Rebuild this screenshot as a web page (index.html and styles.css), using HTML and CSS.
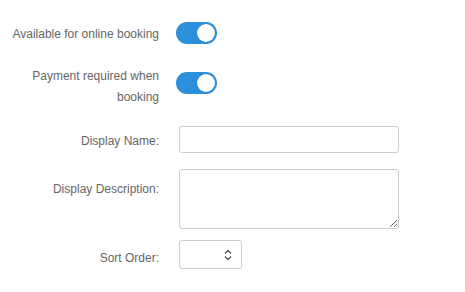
FILE: index.html
```html
<!DOCTYPE html>
<html lang="en">
<head>
    <meta charset="UTF-8">
    <meta name="viewport" content="width=device-width, initial-scale=1.0">
    <link rel="stylesheet" href="styles.css">
</head>
<body>

<!-- Booking settings form -->
<form class="settingsForm">
    <div class="formRow rowFirst">
        <label class="rowLabel labelToggle">Available for online booking</label>
        <div class="rowControl">
            <span class="toggle"><span class="knob"></span></span>
        </div>
    </div>

    <div class="formRow rowPayment">
        <label class="rowLabel">Payment required when booking</label>
        <div class="rowControl">
            <span class="toggle toggleLow"><span class="knob"></span></span>
        </div>
    </div>

    <div class="formRow rowName">
        <label class="rowLabel labelName" for="displayName">Display Name:</label>
        <div class="rowControl">
            <input type="text" id="displayName" class="textInput">
        </div>
    </div>

    <div class="formRow rowDescription">
        <label class="rowLabel labelDescription" for="displayDescription">Display Description:</label>
        <div class="rowControl">
            <textarea id="displayDescription" class="textArea"></textarea>
        </div>
    </div>

    <div class="formRow rowSort">
        <label class="rowLabel labelSort" for="sortOrder">Sort Order:</label>
        <div class="rowControl">
            <div class="selectWrap">
                <select id="sortOrder" class="sortSelect"></select>
                <svg class="chevrons" width="8" height="12" viewBox="0 0 8 12">
                    <path d="M1 4.5 L4 1.5 L7 4.5" fill="none" stroke="#555" stroke-width="1.3"/>
                    <path d="M1 7.5 L4 10.5 L7 7.5" fill="none" stroke="#555" stroke-width="1.3"/>
                </svg>
            </div>
        </div>
    </div>
</form>

</body>
</html>
```

FILE: styles.css
```css
body {
    margin: 0;
    background: #fff;
    font-family: "Liberation Sans", Arial, sans-serif;
    font-size: 12px;
    color: #666;
}

.settingsForm {
    padding-left: 8px;
    padding-top: 22px;
}

.formRow {
    display: flex;
    align-items: flex-start;
    gap: 20px;
}

.rowLabel {
    width: 151px;
    text-align: right;
    line-height: 21px;
    flex-shrink: 0;
}

.labelToggle {
    padding-top: 2px;
}

.rowPayment {
    margin-top: 21px;
}

.rowName {
    margin-top: 18px;
}

.labelName {
    padding-top: 5px;
}

.rowDescription {
    margin-top: 16px;
}

.labelDescription {
    padding-top: 10px;
}

.rowSort {
    margin-top: 11px;
}

.labelSort {
    padding-top: 8px;
}

/* toggle switch */
.toggle {
    display: block;
    position: relative;
    width: 41px;
    height: 22px;
    margin-left: -3px;
    border-radius: 11px;
    background: #2b8fdb;
}

.toggleLow {
    margin-top: 6px;
}

.knob {
    position: absolute;
    top: 2px;
    right: 2px;
    width: 18px;
    height: 18px;
    border-radius: 50%;
    background: #fff;
    box-shadow: 0 0 1px rgba(0, 0, 0, 0.3);
}

/* inputs */
.textInput,
.textArea,
.sortSelect {
    box-sizing: border-box;
    border: 1px solid #ccc;
    border-radius: 3px;
    background: #fff;
    margin: 0;
    font-family: inherit;
    font-size: 12px;
}

.textInput {
    display: block;
    width: 220px;
    height: 27px;
}

.textArea {
    display: block;
    width: 220px;
    height: 60px;
}

.selectWrap {
    position: relative;
    width: 63px;
    height: 29px;
}

.sortSelect {
    display: block;
    width: 63px;
    height: 29px;
    appearance: none;
    -webkit-appearance: none;
}

.chevrons {
    position: absolute;
    right: 10px;
    top: 9px;
}
```
